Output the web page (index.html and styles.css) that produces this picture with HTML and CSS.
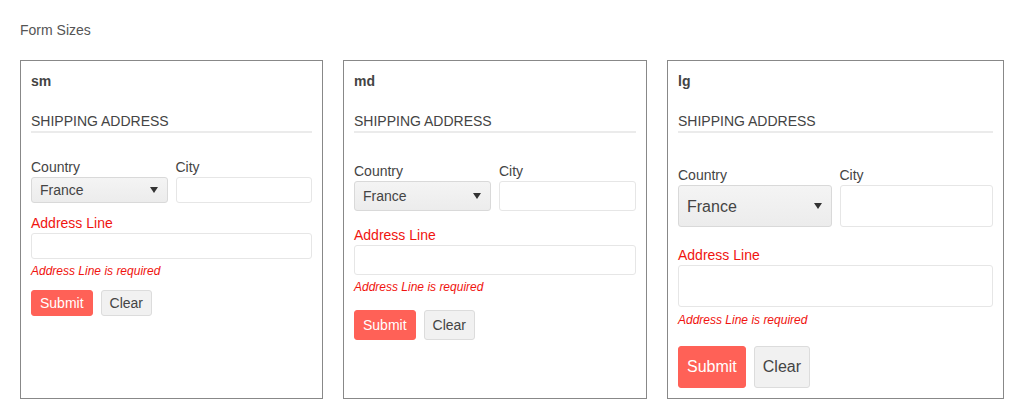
FILE: index.html
```html
<!DOCTYPE html>
<html lang="en">
<head>
<meta charset="utf-8">
<title>Form Sizes</title>
<link rel="stylesheet" href="styles.css">
</head>
<body>
<h1 class="page-title">Form Sizes</h1>
<div class="panels">
  <section class="panel panel-sm size-sm">
    <div class="size-title">sm</div>
    <div class="section-title">SHIPPING ADDRESS</div>
    <div class="row">
      <div class="field">
        <label class="label">Country</label>
        <div class="select-wrap"><select class="control select"><option>France</option></select></div>
      </div>
      <div class="field">
        <label class="label">City</label>
        <input class="control input" type="text">
      </div>
    </div>
    <div class="field field-full">
      <label class="label label-error">Address Line</label>
      <input class="control input" type="text">
      <div class="error">Address Line is required</div>
    </div>
    <div class="actions">
      <button class="btn btn-primary">Submit</button>
      <button class="btn btn-default">Clear</button>
    </div>
  </section>

  <section class="panel panel-md size-md">
    <div class="size-title">md</div>
    <div class="section-title">SHIPPING ADDRESS</div>
    <div class="row">
      <div class="field">
        <label class="label">Country</label>
        <div class="select-wrap"><select class="control select"><option>France</option></select></div>
      </div>
      <div class="field">
        <label class="label">City</label>
        <input class="control input" type="text">
      </div>
    </div>
    <div class="field field-full">
      <label class="label label-error">Address Line</label>
      <input class="control input" type="text">
      <div class="error">Address Line is required</div>
    </div>
    <div class="actions">
      <button class="btn btn-primary">Submit</button>
      <button class="btn btn-default">Clear</button>
    </div>
  </section>

  <section class="panel panel-lg size-lg">
    <div class="size-title">lg</div>
    <div class="section-title">SHIPPING ADDRESS</div>
    <div class="row">
      <div class="field">
        <label class="label">Country</label>
        <div class="select-wrap"><select class="control select"><option>France</option></select></div>
      </div>
      <div class="field">
        <label class="label">City</label>
        <input class="control input" type="text">
      </div>
    </div>
    <div class="field field-full">
      <label class="label label-error">Address Line</label>
      <input class="control input" type="text">
      <div class="error">Address Line is required</div>
    </div>
    <div class="actions">
      <button class="btn btn-primary">Submit</button>
      <button class="btn btn-default">Clear</button>
    </div>
  </section>
</div>
</body>
</html>
```

FILE: styles.css
```css
* { box-sizing: border-box; }

html, body {
  margin: 0;
  padding: 0;
  background: #fff;
}

body {
  padding: 20px;
  font-family: "Liberation Sans", Arial, sans-serif;
  font-size: 14px;
  line-height: 20px;
  color: #444;
}

.page-title {
  margin: 0 0 20px;
  font-size: 14px;
  font-weight: normal;
  line-height: 20px;
  color: #555;
}

.panels {
  display: flex;
  gap: 20px;
  align-items: stretch;
}

.panel {
  border: 1px solid #888;
  padding: 10px;
  height: 339px;
}

.panel-sm { width: 303px; }
.panel-md { width: 304px; }
.panel-lg { width: 337px; }

.size-title {
  font-weight: bold;
  line-height: 20px;
  color: #444;
}

.section-title {
  margin-top: 20px;
  line-height: 20px;
  border-bottom: 2px solid #ebebeb;
}

.row {
  display: grid;
  grid-template-columns: 1fr 1fr;
  column-gap: 8px;
}

.field { display: flex; flex-direction: column; }

.label {
  display: block;
  line-height: 20px;
  color: #444;
}

.label-error { color: #f0140f; }

.select-wrap {
  position: relative;
}

.select-wrap::after {
  content: "";
  position: absolute;
  right: 10px;
  top: 50%;
  margin-top: -3px;
  border-left: 4.5px solid transparent;
  border-right: 4.5px solid transparent;
  border-top: 6px solid #333;
  pointer-events: none;
}

.control {
  display: block;
  width: 100%;
  margin: 0;
  font-family: "Liberation Sans", Arial, sans-serif;
  color: #444;
  border-radius: 3px;
  outline: none;
}

.select {
  -webkit-appearance: none;
  appearance: none;
  border: 1px solid #d9d9d9;
  background: linear-gradient(#f4f4f4, #ececec);
  padding: 0 24px 0 8px;
}

.input {
  border: 1px solid #e6e6e6;
  background: #fff;
  padding: 0 8px;
}

.error {
  font-size: 12px;
  font-style: italic;
  line-height: 16px;
  color: #f0140f;
}

.actions {
  display: flex;
  gap: 8px;
}

.btn {
  font-family: "Liberation Sans", Arial, sans-serif;
  border-radius: 3px;
  padding: 0 8px;
  margin: 0;
  cursor: pointer;
}

.btn-primary {
  background: #ff6157;
  border: 1px solid #ff6157;
  color: #fff;
}

.btn-default {
  background: #f1f1f1;
  border: 1px solid #dcdcdc;
  color: #444;
}

/* sizes */
.size-sm .row { margin-top: 24px; }
.size-sm .control { height: 26px; font-size: 14px; }
.size-sm .field-full { margin-top: 10px; }
.size-sm .error { margin-top: 4px; }
.size-sm .actions { margin-top: 11px; }
.size-sm .btn { height: 26px; font-size: 14px; }

.size-md .row { margin-top: 28px; }
.size-md .control { height: 30px; font-size: 14px; }
.size-md .field-full { margin-top: 14px; }
.size-md .error { margin-top: 4px; }
.size-md .actions { margin-top: 15px; }
.size-md .btn { height: 30px; font-size: 14px; }

.size-lg .row { margin-top: 32px; }
.size-lg .control { height: 42px; font-size: 16px; }
.size-lg .field-full { margin-top: 18px; }
.size-lg .error { margin-top: 5px; }
.size-lg .actions { margin-top: 18px; }
.size-lg .btn { height: 42px; font-size: 16px; }
```
